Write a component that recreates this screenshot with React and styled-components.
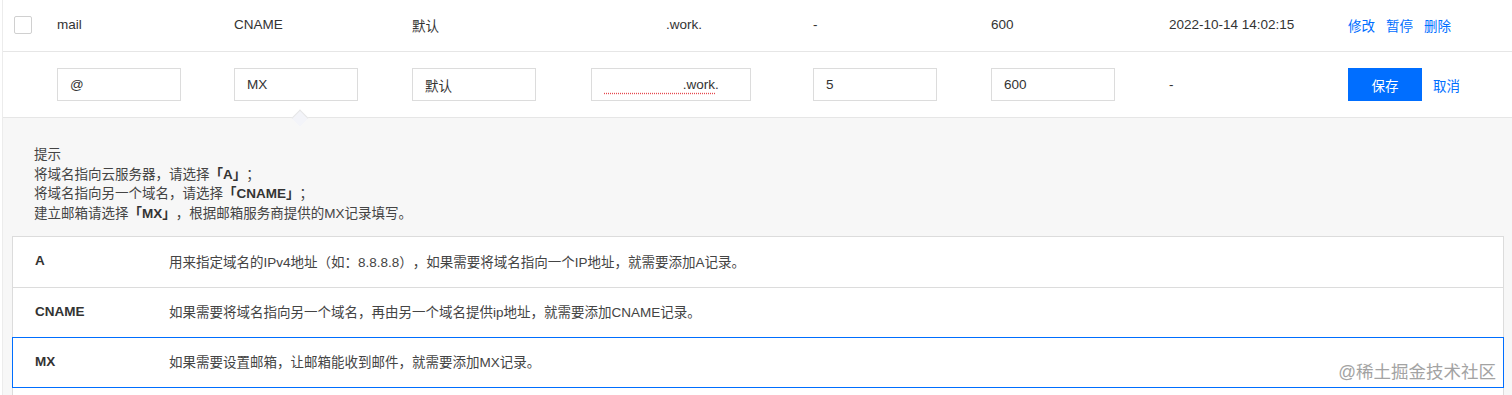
import React from 'react'
import styled, { createGlobalStyle } from 'styled-components'

const GlobalStyle = createGlobalStyle`
    html, body {
        margin: 0;
        padding: 0;
        background: #fff;
        overflow: hidden;
    }
    body {
        font-family: "Liberation Sans", "Noto Sans CJK SC", sans-serif;
        font-size: 13.5px;
        color: #333;
        text-spacing-trim: space-all;
    }
`

const Page = styled.div`
    position: relative;
    width: 1512px;
    height: 395px;
    padding-left: 2px;
    box-sizing: border-box;
    overflow: hidden;
`

const Frame = styled.div`
    border-left: 1px solid #ececec;
    display: flex;
    flex-direction: column;
`

const Row = styled.div`
    flex-shrink: 0;
    display: grid;
    grid-template-columns: 54px 177px 178px 179px 222px 178px 178px 179px 1fr;
    align-items: center;
    height: ${(p) => p.h}px;
    border-bottom: 1px solid #e6e6e6;
    background: #fff;
    padding-bottom: ${(p) => p.pb || 0}px;
    box-sizing: content-box;
`

const Cell = styled.div`
    white-space: nowrap;
    color: #333;
`

const CheckCell = styled.div`
    padding-left: 11px;
    display: flex;
`

const Checkbox = styled.span`
    width: 16px;
    height: 16px;
    border: 1px solid #d0d0d0;
    border-radius: 2px;
    background: #fff;
`

const Masked = styled.span`
    padding-left: 75px;
`

const Actions = styled.div`
    display: flex;
    gap: 11px;
    align-items: center;
`

const Link = styled.a`
    color: #006eff;
    cursor: pointer;
    white-space: nowrap;
`

const Field = styled.div`
    width: ${(p) => p.w || 124}px;
    height: 33px;
    border: 1px solid #dcdcdc;
    box-sizing: border-box;
    padding: 0 12px;
    display: flex;
    align-items: center;
    background: #fff;
    color: #333;
    white-space: nowrap;
`

const Squiggle = styled.span`
    text-decoration: underline dotted #e5484d;
    text-underline-offset: 4px;
`

const Blank = styled.span`
    color: transparent;
`

const SaveButton = styled.button`
    width: 74px;
    height: 33px;
    border: none;
    background: #006eff;
    color: #fff;
    font-family: inherit;
    font-size: 13.5px;
    cursor: pointer;
`

const Panel = styled.div`
    position: relative;
    flex-shrink: 0;
    background: #f7f7f7;
    padding: 27px 8px 0 9px;
`

const Caret = styled.span`
    position: absolute;
    top: -6px;
    left: 291px;
    width: 11px;
    height: 11px;
    background: #f3f4f9;
    border-top: 1px solid #e6e6e6;
    border-left: 1px solid #e6e6e6;
    transform: rotate(45deg);
`

const Hint = styled.div`
    margin-left: 22px;
    line-height: 19.5px;
    color: #444;
    margin-bottom: 13px;
`

const Strong = styled.b`
    color: #333;
`

const TypeTable = styled.div`
    display: flex;
    flex-direction: column;
    background: #fff;
`

const TypeRow = styled.div`
    position: relative;
    z-index: ${(p) => (p.active ? 1 : 0)};
    display: grid;
    grid-template-columns: 156px 1fr;
    align-items: center;
    height: 51px;
    padding-bottom: 3px;
    box-sizing: border-box;
    margin-top: -1px;
    border: 1px solid ${(p) => (p.active ? '#006eff' : '#dcdcdc')};
    background: #fff;
    &:first-child {
        margin-top: 0;
        height: 52px;
    }
`

const TypeName = styled.div`
    padding-left: 22px;
    font-weight: bold;
    color: #333;
`

const TypeDesc = styled.div`
    color: #444;
`

const Watermark = styled.div`
    position: absolute;
    z-index: 5;
    right: 16px;
    bottom: 12px;
    font-size: 17.5px;
    color: #a3a3a3;
    text-shadow: 0 0 1px #fff;
    white-space: nowrap;
`

const types = [
    { name: 'A', desc: '用来指定域名的IPv4地址（如：8.8.8.8），如果需要将域名指向一个IP地址，就需要添加A记录。' },
    { name: 'CNAME', desc: '如果需要将域名指向另一个域名，再由另一个域名提供ip地址，就需要添加CNAME记录。' },
    { name: 'MX', desc: '如果需要设置邮箱，让邮箱能收到邮件，就需要添加MX记录。', active: true },
    // next row only peeks in at the bottom edge
    { name: '', desc: '' },
]

export default function App() {
    return (
        <Page>
            <GlobalStyle />
            <Frame>
                <Row h={49} pb={2}>
                    <CheckCell>
                        <Checkbox />
                    </CheckCell>
                    <Cell>mail</Cell>
                    <Cell>CNAME</Cell>
                    <Cell>默认</Cell>
                    <Cell>
                        <Masked>.work.</Masked>
                    </Cell>
                    <Cell>-</Cell>
                    <Cell>600</Cell>
                    <Cell>2022-10-14 14:02:15</Cell>
                    <Actions>
                        <Link>修改</Link>
                        <Link>暂停</Link>
                        <Link>删除</Link>
                    </Actions>
                </Row>
                <Row h={65}>
                    <div />
                    <Field>@</Field>
                    <Field>MX</Field>
                    <Field>默认</Field>
                    <Field w={160}>
                        <Squiggle>
                            <Blank>{'\u00a0'.repeat(21)}</Blank>.work
                        </Squiggle>
                        .
                    </Field>
                    <Field>5</Field>
                    <Field>600</Field>
                    <Cell>-</Cell>
                    <Actions>
                        <SaveButton>保存</SaveButton>
                        <Link>取消</Link>
                    </Actions>
                </Row>
                <Panel>
                    <Caret />
                    <Hint>
                        提示
                        <br />
                        将域名指向云服务器，请选择<Strong>「A」</Strong>；
                        <br />
                        将域名指向另一个域名，请选择<Strong>「CNAME」</Strong>；
                        <br />
                        建立邮箱请选择<Strong>「MX」</Strong>，根据邮箱服务商提供的MX记录填写。
                    </Hint>
                    <TypeTable>
                        {types.map((t, i) => (
                            <TypeRow key={i} active={t.active}>
                                <TypeName>{t.name}</TypeName>
                                <TypeDesc>{t.desc}</TypeDesc>
                            </TypeRow>
                        ))}
                    </TypeTable>
                </Panel>
            </Frame>
            <Watermark>@稀土掘金技术社区</Watermark>
        </Page>
    )
}
